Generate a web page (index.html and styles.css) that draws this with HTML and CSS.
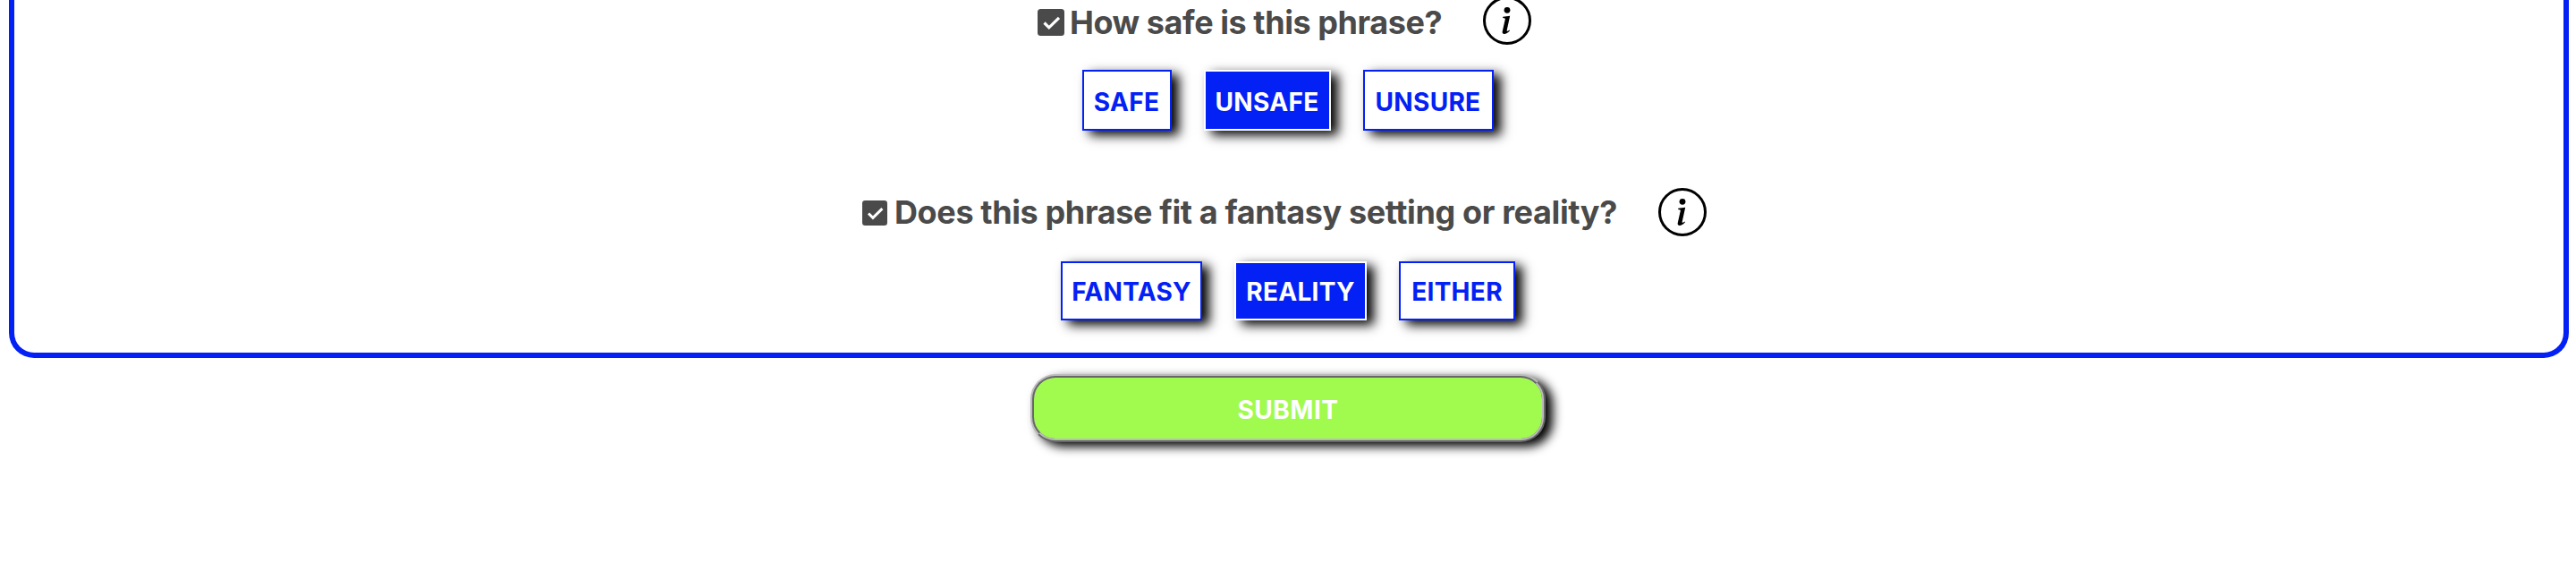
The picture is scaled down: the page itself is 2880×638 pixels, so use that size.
FILE: index.html
```html
<!DOCTYPE html>
<html lang="en">
<head>
<meta charset="utf-8">
<title>Phrase survey</title>
<link rel="stylesheet" href="styles.css">
</head>
<body>
<main class="page">
  <section class="panel">
    <div class="question question-safe">
      <svg class="check check-lg" viewBox="0 0 30 30"><rect width="30" height="30" rx="3.5"/><path d="M7.5 15.5l5.3 5.3L24 9.8"/></svg>
      <h2 class="title title-safe">How safe is this phrase?</h2>
      <svg class="info" viewBox="0 0 54 54"><circle class="ring" cx="27" cy="27" r="25.5"/><circle cx="27" cy="15.3" r="3.4"/><path d="M22.3 22.7l7.9-.9-3.5 16c-.3 1.400.6 1.500 2.900-.2l.4.7c-2.500 2.800-4.700 3.900-6.600 3.700-1.600-.2-2-1.500-1.600-3.200l3-13.200c.3-1.300-.5-1.600-2.700-1.700z"/></svg>
    </div>
    <div class="options options-safe">
      <button class="option w-safe">SAFE</button>
      <button class="option selected w-unsafe">UNSAFE</button>
      <button class="option w-unsure">UNSURE</button>
    </div>
    <div class="question question-setting">
      <svg class="check" viewBox="0 0 30 30"><rect width="30" height="30" rx="3.5"/><path d="M7.5 15.5l5.3 5.3L24 9.8"/></svg>
      <h2 class="title title-setting">Does this phrase fit a fantasy setting or reality?</h2>
      <svg class="info" viewBox="0 0 54 54"><circle class="ring" cx="27" cy="27" r="25.5"/><circle cx="27" cy="15.3" r="3.4"/><path d="M22.3 22.7l7.9-.9-3.5 16c-.3 1.400.6 1.500 2.900-.2l.4.7c-2.500 2.800-4.700 3.900-6.600 3.700-1.600-.2-2-1.500-1.600-3.200l3-13.200c.3-1.300-.5-1.600-2.700-1.700z"/></svg>
    </div>
    <div class="options options-setting">
      <button class="option w-fantasy">FANTASY</button>
      <button class="option selected w-reality">REALITY</button>
      <button class="option w-either">EITHER</button>
    </div>
  </section>
  <button class="submit">SUBMIT</button>
</main>
</body>
</html>
```
FILE: styles.css
```css
* { box-sizing: border-box; }
body { margin: 0; background: #fff; font-family: Inter, "Liberation Sans", sans-serif; overflow: hidden; }
.page { height: 638px; padding: 0 8px 0 10px; display: flex; flex-direction: column; }
.panel { height: 400px; flex: none; border: 6px solid #0320f5; border-top: 0; border-radius: 0 0 28px 28px; display: flex; flex-direction: column; }
.question { display: flex; height: 54px; flex: none; }
.question-safe { margin: -4px 0 0 1144px; }
.question-setting { margin: 64px 0 0 948px; }
.check { width: 28px; height: 28px; margin-top: 14px; flex: none; fill: #4a4a4a; }
.check-lg { width: 30px; height: 30px; }
.check path { fill: none; stroke: #fff; stroke-width: 3.2; }
.title { margin: 0; font-size: 36px; line-height: 54px; font-weight: 700; letter-spacing: -0.38px; color: #4a4a4a; white-space: nowrap; flex: none; }
.title-safe { width: 468px; padding-left: 6px; line-height: 58px; letter-spacing: -0.44px; }
.title-setting { width: 862px; padding-left: 8px; }
.info { width: 54px; height: 54px; flex: none; }
.ring { fill: none; stroke: #000; stroke-width: 3; }
.options { display: flex; flex: none; }
.options-safe { margin: 28px 0 0 1194px; height: 68px; gap: 36px; }
.options-setting { margin: 28px 0 0 1170px; height: 66px; gap: 36px; }
.option { padding: 2px 0 0; border: 2px solid #0320f5; background: #fff; color: #0320f5; font: 700 28px Inter, "Liberation Sans", sans-serif; letter-spacing: 0.3px; box-shadow: 8px 5px 12px #000; white-space: nowrap; }
.options-safe .option { padding: 4px 1px 0 0; }
.selected { background: #0320f5; color: #fff; border-color: #fff; }
.w-safe { width: 100px; }
.w-unsafe { width: 142px; }
.w-unsure { width: 146px; }
.w-fantasy { width: 158px; }
.w-reality { width: 148px; }
.w-either { width: 130px; }
.submit { width: 576px; height: 76px; margin: 18px 0 0 1142px; padding: 4px 0 0; border: 4px ridge #bbb; border-radius: 28px; background: #a1fb4e; color: #fff; font: 700 28px Inter, "Liberation Sans", sans-serif; letter-spacing: 0.5px; box-shadow: 8px 5px 12px #000; }
```
